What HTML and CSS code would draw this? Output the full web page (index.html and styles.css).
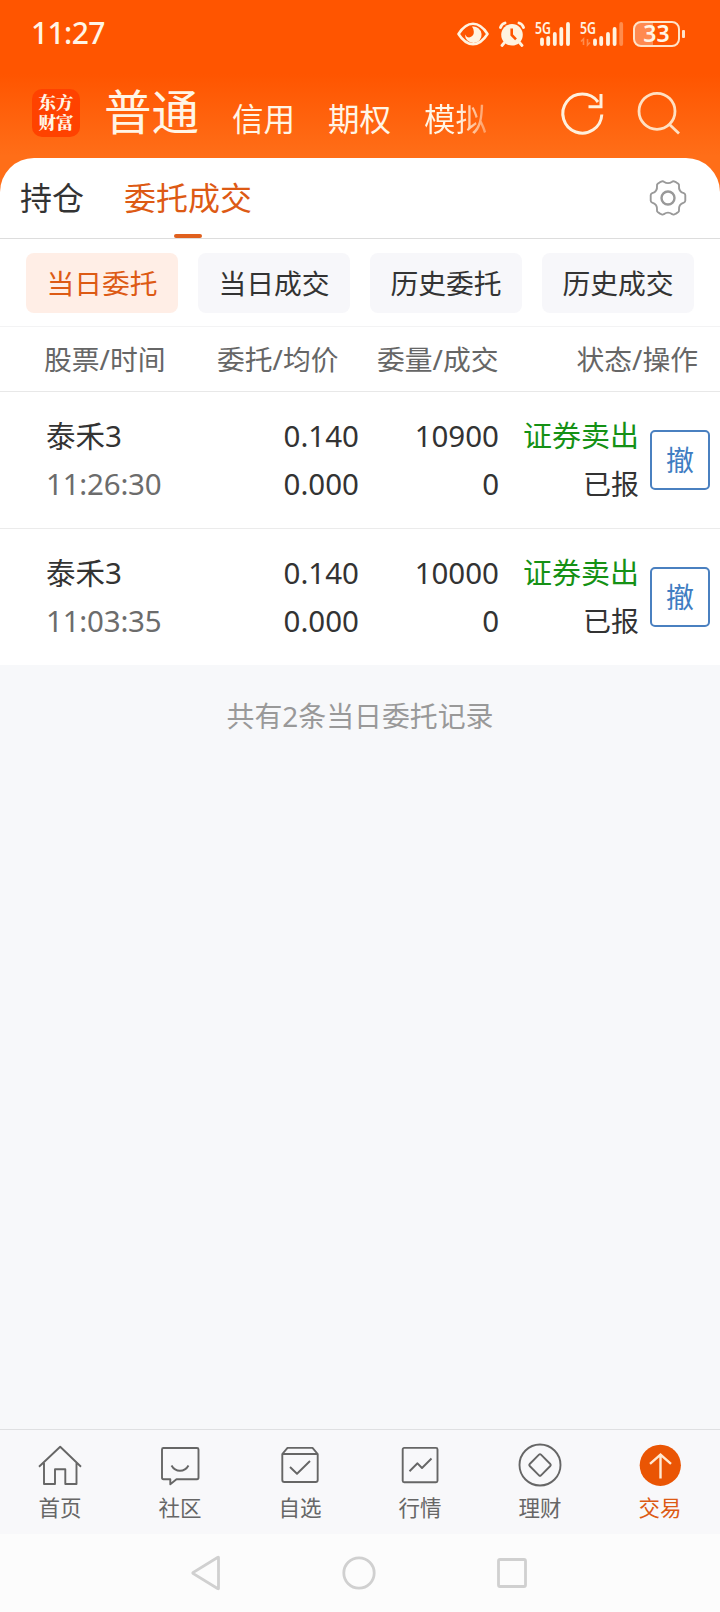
FILE: index.html
```html
<!DOCTYPE html>
<html lang="zh-CN">
<head>
<meta charset="utf-8">
<title>委托成交</title>
<link rel="stylesheet" href="styles.css">
</head>
<body>
<div class="screen">
  <header class="top">
    <div class="status">
      <span class="clock">11:27</span>
      <div class="status-icons">
        <svg class="eye" width="32" height="26" viewBox="0 0 32 26">
          <path d="M1.500 13Q8 2.800 16 2.800Q24 2.800 30.500 13Q24 23.200 16 23.200Q8 23.200 1.500 13Z" fill="none" stroke="#fff3e0" stroke-width="2.600" stroke-linejoin="round"/>
          <path d="M15 5.500A8.300 8.300 0 1 1 8 13.500Q9.800 17 13 16.300Q17.300 14.500 16.800 10.500Q16.500 7.500 15 5.500Z" fill="#fff3e0"/>
        </svg>
        <svg class="alarm" width="26" height="26" viewBox="0 0 26 26">
          <circle cx="13" cy="13.800" r="10.800" fill="#fff3e0"/>
          <path d="M1.500 6.500Q2.500 3 6 2M24.500 6.500Q23.500 3 20 2M5.500 21.500L3 24.500M20.500 21.500L23 24.500" stroke="#fff3e0" stroke-width="2.800" stroke-linecap="round" fill="none"/>
          <path d="M12.700 7.500V14L17 18.300" stroke="#ff5500" stroke-width="2.600" fill="none"/>
        </svg>
        <svg class="sig1" width="36" height="26" viewBox="0 0 36 26">
          <text class="net" x="0" y="13" textLength="16" lengthAdjust="spacingAndGlyphs">5G</text>
          <path d="M7 18.500V23M13.200 17V23M19.800 13V23M26.300 8V23M33 3V23" stroke="#fff3e0" stroke-width="3.800" stroke-linecap="round"/>
        </svg>
        <svg class="sig2" width="44" height="26" viewBox="0 0 44 26">
          <text class="net" x="0" y="13" textLength="16" lengthAdjust="spacingAndGlyphs">5G</text>
          <path d="M3.500 24V18L1 20.500M7.500 18V24L10 21.500" stroke="#ff8d4e" stroke-width="1.600" fill="none"/>
          <path d="M15 19.500V23M21.200 17V23M28 13V23M34.600 8V23" stroke="#fff3e0" stroke-width="3.800" stroke-linecap="round"/>
          <path d="M41.200 3V23" stroke="#ff8c4c" stroke-width="3.800" stroke-linecap="round"/>
        </svg>
        <div class="battery"><span>33</span></div>
      </div>
    </div>
    <div class="nav">
      <div class="logo"><span>东方</span><span>财富</span></div>
      <span class="mode current">普通</span>
      <span class="mode credit">信用</span>
      <span class="mode option">期权</span>
      <span class="mode sim">模拟</span>
      <svg class="refresh" width="48" height="48" viewBox="0 0 48 48" fill="none" stroke="#fff0dc" stroke-width="3">
        <path d="M42.800 24.500A19.500 19.500 0 1 1 39 12"/><path d="M42 4V16.700H29.500"/>
      </svg>
      <svg class="search" width="48" height="48" viewBox="0 0 48 48" fill="none" stroke="#ffe0c2" stroke-width="2.800">
        <circle cx="22" cy="21.300" r="18"/><path d="M34.500 34.500L44 43.500"/>
      </svg>
    </div>
  </header>

  <main class="panel">
    <div class="tabs">
      <span class="tab">持仓</span>
      <span class="tab active">委托成交</span>
      <svg class="gear" width="40" height="40" viewBox="0 0 40 40" fill="none" stroke="#999" stroke-width="1.900">
        <path stroke-linejoin="round" d="M12 4.200L14 3.300Q15 2.900 15.900 3.700Q20 6.600 24.100 3.700Q25 2.900 26 3.300L28 4.200L30.300 5.800Q31.200 6.500 31 7.800Q30.400 13.500 35.800 15.200Q37.300 15.800 37.300 17.300V22.500Q37.300 24 35.800 24.600Q30.400 26.300 31 32Q31.200 33.300 30.300 34L28 35.600L26 36.500Q25 36.900 24.100 36.100Q20 33.200 15.900 36.100Q15 36.900 14 36.500L12 35.600L9.700 34Q8.800 33.300 9 32Q9.600 26.300 4.200 24.600Q2.700 24 2.700 22.500V17.300Q2.700 15.800 4.200 15.200Q9.600 13.500 9 7.800Q8.800 6.500 9.700 5.800Z"/>
        <circle cx="20" cy="20" r="6.500" stroke-width="2.400"/>
      </svg>
    </div>
    <div class="chips">
      <span class="chip on">当日委托</span>
      <span class="chip">当日成交</span>
      <span class="chip">历史委托</span>
      <span class="chip">历史成交</span>
    </div>
    <div class="cols">
      <span>股票/时间</span><span>委托/均价</span><span>委量/成交</span><span>状态/操作</span>
    </div>
    <div class="order">
      <div class="cell name"><span>泰禾3</span><span class="time">11:26:30</span></div>
      <div class="cell"><span>0.140</span><span>0.000</span></div>
      <div class="cell"><span>10900</span><span>0</span></div>
      <div class="cell"><span class="sell">证券卖出</span><span class="state">已报</span></div>
      <span class="cancel">撤</span>
    </div>
    <div class="order">
      <div class="cell name"><span>泰禾3</span><span class="time">11:03:35</span></div>
      <div class="cell"><span>0.140</span><span>0.000</span></div>
      <div class="cell"><span>10000</span><span>0</span></div>
      <div class="cell"><span class="sell">证券卖出</span><span class="state">已报</span></div>
      <span class="cancel">撤</span>
    </div>
  </main>

  <p class="summary">共有2条当日委托记录</p>

  <nav class="tabbar">
    <div class="item">
      <svg class="icon" viewBox="0 0 48 48"><path d="M3 25.800L24.200 5.800L45 25.800M8 22V43H19V28.200H29.300V43H40.500V22"/></svg>
      <span>首页</span>
    </div>
    <div class="item">
      <svg class="icon" viewBox="0 0 48 48"><path d="M7.500 7H41Q42.500 7 42.500 8.500V36.500Q42.500 38.200 41 38.200H20.500L14.300 43.300V38.200H7.500Q6 38.200 6 36.500V8.500Q6 7 7.500 7ZM15.500 24.500Q18.500 29.800 24 29.800Q29.500 29.800 32.500 24.500"/></svg>
      <span>社区</span>
    </div>
    <div class="item">
      <svg class="icon" viewBox="0 0 48 48"><path d="M6.300 13L11.500 6.900H36.500L41.700 13V39Q41.700 41 39.700 41H8.300Q6.300 41 6.300 39ZM6.300 13H41.700M14 26L21 32.800L34 20"/></svg>
      <span>自选</span>
    </div>
    <div class="item">
      <svg class="icon" viewBox="0 0 48 48"><rect x="6.700" y="6.900" width="34.800" height="34.300" rx="1.500"/><path d="M13.500 30.200L21.500 22.300L26 27L35.500 17.500"/></svg>
      <span>行情</span>
    </div>
    <div class="item">
      <svg class="icon" viewBox="0 0 48 48"><circle cx="24" cy="24" r="20.500"/><path d="M23 13.700Q24 12.700 25 13.700L34.300 23Q35.300 24 34.300 25L25 34.300Q24 35.300 23 34.300L13.700 25Q12.700 24 13.700 23Z"/></svg>
      <span>理财</span>
    </div>
    <div class="item selected">
      <svg class="icon" viewBox="0 0 48 48"><circle class="disc" cx="24.300" cy="24.300" r="20.600"/><path class="arrow" d="M24.500 37.500V13.500M14 22.800L24.500 13.500L35 22.800"/></svg>
      <span>交易</span>
    </div>
  </nav>

  <div class="sysnav">
    <svg viewBox="0 0 40 40"><path d="M32.500 4.500V35.500Q32.500 36 31.500 35.500L7 20.500Q6.500 20 7 19.500L31.500 4.500Q32.500 4 32.500 4.500Z"/></svg>
    <svg viewBox="0 0 40 40"><circle cx="20" cy="20" r="15.200"/></svg>
    <svg viewBox="0 0 40 40"><rect x="6.500" y="6.500" width="27" height="27" rx="1.500"/></svg>
  </div>
</div>
</body>
</html>
```

FILE: styles.css
```css
* { box-sizing: border-box; }
body {
  margin: 0;
  font-family: "Noto Sans", "Noto Sans CJK SC", sans-serif;
  color: #333;
}
svg { display: block; flex: none; overflow: visible; }
.screen {
  width: 720px;
  height: 1612px;
  display: flex;
  flex-direction: column;
  background: #f7f8fa;
  overflow: hidden;
}

/* Header */
.top {
  flex: none;
  height: 198px;
  margin-bottom: -40px;
  background: linear-gradient(#ff5500 0, #ff5500 74px, #ff6e18 156px);
  color: #fff5e6;
}
.status {
  height: 68px;
  padding: 0 35px 0 31px;
  display: flex;
  align-items: center;
  justify-content: space-between;
}
.clock { font-size: 30px; font-weight: 500; line-height: 40px; letter-spacing: -0.6px; margin-top: -2px; }
.status-icons { display: flex; align-items: center; }
.alarm { margin-left: 10px; }
.sig1 { margin-left: 10px; }
.sig2 { margin-left: 9px; }
.net { font: 600 16.500px "Noto Sans", sans-serif; fill: #fff3e0; }
.battery {
  position: relative;
  width: 47px;
  height: 26px;
  margin: 0 5px 0 9px;
  border: 2px solid #ffe3c8;
  border-radius: 8px;
  background: linear-gradient(90deg, #ff8a50 18px, transparent 18px);
  font-size: 23px;
  font-weight: 600;
  line-height: 21px;
  text-align: center;
}
.battery::after {
  content: "";
  position: absolute;
  right: -7px;
  top: 7px;
  width: 3px;
  height: 8px;
  border-radius: 1px;
  background: #ffe3c8;
}
.nav { display: flex; height: 90px; padding-left: 32px; }
.logo {
  width: 48px;
  height: 48px;
  margin-top: 21px;
  padding-top: 3px;
  border-radius: 10px;
  background: #ff4200;
  display: flex;
  flex-direction: column;
  align-items: center;
  font: 900 17.500px/20px "Noto Serif CJK SC", "Noto Sans CJK SC", serif;
}
.mode { font-size: 31.500px; line-height: 40px; margin-top: 31px; white-space: nowrap; }
.current { font-size: 47.500px; line-height: 60px; margin: 14px 0 0 24px; }
.credit { margin-left: 33px; }
.option { margin-left: 33px; }
.sim {
  margin-left: 33px;
  color: transparent;
  background: linear-gradient(90deg, #fff5e6 55%, #ff9a5e 100%);
  -webkit-background-clip: text;
  background-clip: text;
}
.refresh { margin: 22px 0 0 72px; }
.search { margin: 22px 0 0 28px; }

/* Order panel */
.panel {
  flex: none;
  background: #fff;
  border-radius: 34px 34px 0 0;
  overflow: hidden;
}
.tabs {
  height: 81px;
  padding: 0 32px 0 20px;
  display: flex;
  align-items: center;
  border-bottom: 1px solid #ddd;
}
.tab { font-size: 32px; line-height: 80px; margin-right: 40px; }
.active { position: relative; color: #dd5a14; }
.active::after {
  content: "";
  position: absolute;
  left: 50px;
  bottom: 0;
  width: 28px;
  height: 4px;
  border-radius: 2px;
  background: #e0601e;
}
.gear { margin-left: auto; }
.chips {
  height: 88px;
  padding: 14px 26px 0;
  display: flex;
  gap: 20px;
  border-bottom: 1px solid #f3f3f4;
}
.chip {
  width: 152px;
  height: 60px;
  border-radius: 8px;
  background: #f7f7fa;
  font-size: 27.800px;
  line-height: 60px;
  text-align: center;
}
.chip.on { background: #ffeee6; color: #dd5a14; }
.cols {
  height: 65px;
  padding: 0 22px 0 44px;
  display: grid;
  grid-template-columns: 173px 160px 1fr auto;
  border-bottom: 1px solid #e8e8e8;
  font-size: 27.800px;
  line-height: 65px;
  color: #666;
}
.order {
  height: 137px;
  padding: 0 10px 0 46px;
  display: grid;
  grid-template-columns: 153px 160px 140px 140px 60px;
  justify-content: start;
  align-items: center;
  border-bottom: 1px solid #ebebeb;
  font-size: 29.500px;
  line-height: 48px;
}
.order:last-child { height: 136px; border-bottom: 0; }
.cell { display: flex; flex-direction: column; text-align: right; }
.name { text-align: left; }
.time { color: #6c6c6c; letter-spacing: -0.2px; }
.sell { color: #159115; font-size: 29px; white-space: nowrap; }
.state { font-size: 28px; }
.cancel {
  margin-left: 11px;
  width: 60px;
  height: 60px;
  border: 2px solid #4a80c0;
  border-radius: 5px;
  color: #3f7dc2;
  font-size: 28px;
  line-height: 56px;
  text-align: center;
}
.summary {
  flex: 1;
  margin: 0;
  padding-top: 31px;
  font-size: 27.900px;
  line-height: 40px;
  text-align: center;
  color: #999;
}

/* Bottom bars */
.tabbar {
  flex: none;
  height: 105px;
  display: grid;
  grid-template-columns: repeat(6, 1fr);
  border-top: 1px solid #dfe0e2;
  background: #f8f8fa;
  color: #666;
}
.item {
  display: flex;
  flex-direction: column;
  align-items: center;
  padding-top: 11px;
  font-size: 21.500px;
  line-height: 38px;
}
.icon {
  width: 48px;
  height: 48px;
  fill: none;
  stroke: #666;
  stroke-width: 1.900;
  stroke-linejoin: round;
}
.selected { color: #dd5a14; }
.icon .disc { fill: #ea5504; stroke: none; }
.icon .arrow { stroke: #ffe9d2; stroke-width: 2.400; stroke-linejoin: miter; }
.sysnav {
  flex: none;
  height: 78px;
  padding-left: 186px;
  display: flex;
  align-items: center;
  gap: 113px;
  background: #fcfcfc;
}
.sysnav svg { width: 40px; height: 40px; fill: none; stroke: #d0d0d0; stroke-width: 2.800; }
```
